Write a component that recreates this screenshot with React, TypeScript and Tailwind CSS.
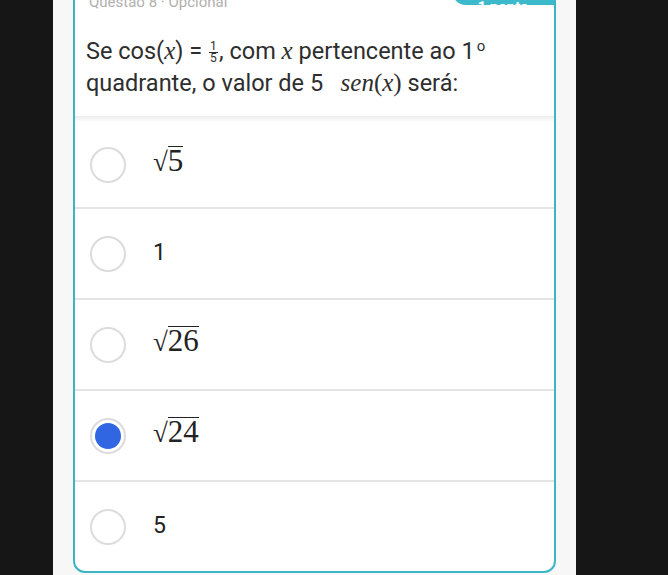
import React from "react";

const OPTIONS = [
  { id: "a", kind: "sqrt", value: "5" },
  { id: "b", kind: "text", value: "1" },
  { id: "c", kind: "sqrt", value: "26" },
  { id: "d", kind: "sqrt", value: "24", selected: true },
  { id: "e", kind: "text", value: "5" },
];

function Sqrt({ value }: { value: string }) {
  return (
    <span className="inline-flex items-start font-['Liberation_Serif',serif] leading-none text-[#222] -mt-[6px]">
      <span className="mt-[1px] text-[27px] leading-[30px]">√</span>
      <span className="border-t-[1.5px] border-[#222] text-[31px] leading-[28px]">{value}</span>
    </span>
  );
}

function Radio({ selected }: { selected?: boolean }) {
  return (
    <div className="w-9 h-9 rounded-full border-2 border-[#dcdcdc] bg-white flex items-center justify-center flex-shrink-0">
      {selected && <div className="w-[26px] h-[26px] rounded-full bg-[#3066e2]" />}
    </div>
  );
}

export default function App() {
  return (
    <div className="w-[668px] h-[575px] overflow-hidden bg-[#161616] flex font-['Roboto',sans-serif]">
      <div className="ml-[53px] w-[523px] h-full bg-[#f7f7f7] pl-5">
        <div className="w-[483px] -mt-[28px] bg-white border-2 border-[#3bb5c3] rounded-b-[12px] overflow-hidden">
          {/* header row, mostly scrolled off */}
          <div className="relative h-[31px] flex items-end pl-[14px]">
            <span className="text-[15px] leading-[18px] text-[#b0b0b0] mb-[-6px]">Questão 8 · Opcional</span>
            <div className="absolute right-0 top-0 w-[102px] h-[31px] bg-[#3cb9cb] rounded-bl-[14px] flex items-end justify-center">
              <span className="text-white font-bold text-[15px] leading-[15px] translate-y-[10px]">1 ponto</span>
            </div>
          </div>

          {/* question */}
          <div className="pt-[30px] pb-[17px] pl-[11px] text-[23.5px] leading-[32px] text-[#2e2e2e]">
            <div className="flex items-center whitespace-nowrap">
              Se cos(<i className="font-['Liberation_Serif',serif] text-[25px]">x</i>) =&nbsp;
              <span className="inline-flex flex-col items-center text-[12px] leading-[11px] mt-[2px] mx-[1px]">
                <span>1</span>
                <span className="border-t border-[#2e2e2e] w-[9px] text-center">5</span>
              </span>
              , com&nbsp;<i className="font-['Liberation_Serif',serif] text-[25px]">x</i>&nbsp;pertencente ao 1
              <sup className="text-[15px] -top-[5px] ml-[2px]">o</sup>
            </div>
            <div className="whitespace-nowrap">
              quadrante, o valor de 5&nbsp;&nbsp;&nbsp;
              <span className="font-['Liberation_Serif',serif] text-[25px]">
                <i>sen</i>(<i>x</i>)
              </span>{" "}
              será:
            </div>
          </div>

          <div className="h-[6px] bg-gradient-to-b from-[#ebebeb] to-white" />

          {/* options */}
          {OPTIONS.map((opt, i) => (
            <div
              key={opt.id}
              className={
                i === 0
                  ? "h-[85px] flex items-center pl-[15px] gap-[27px]"
                  : "h-[91px] flex items-center pl-[15px] gap-[27px] border-t-2 border-[#e4e4e4]"
              }
            >
              <Radio selected={opt.selected} />
              {opt.kind === "sqrt" ? (
                <Sqrt value={opt.value} />
              ) : (
                <span className="text-[23px] text-[#222]">{opt.value}</span>
              )}
            </div>
          ))}
        </div>
      </div>
    </div>
  );
}
